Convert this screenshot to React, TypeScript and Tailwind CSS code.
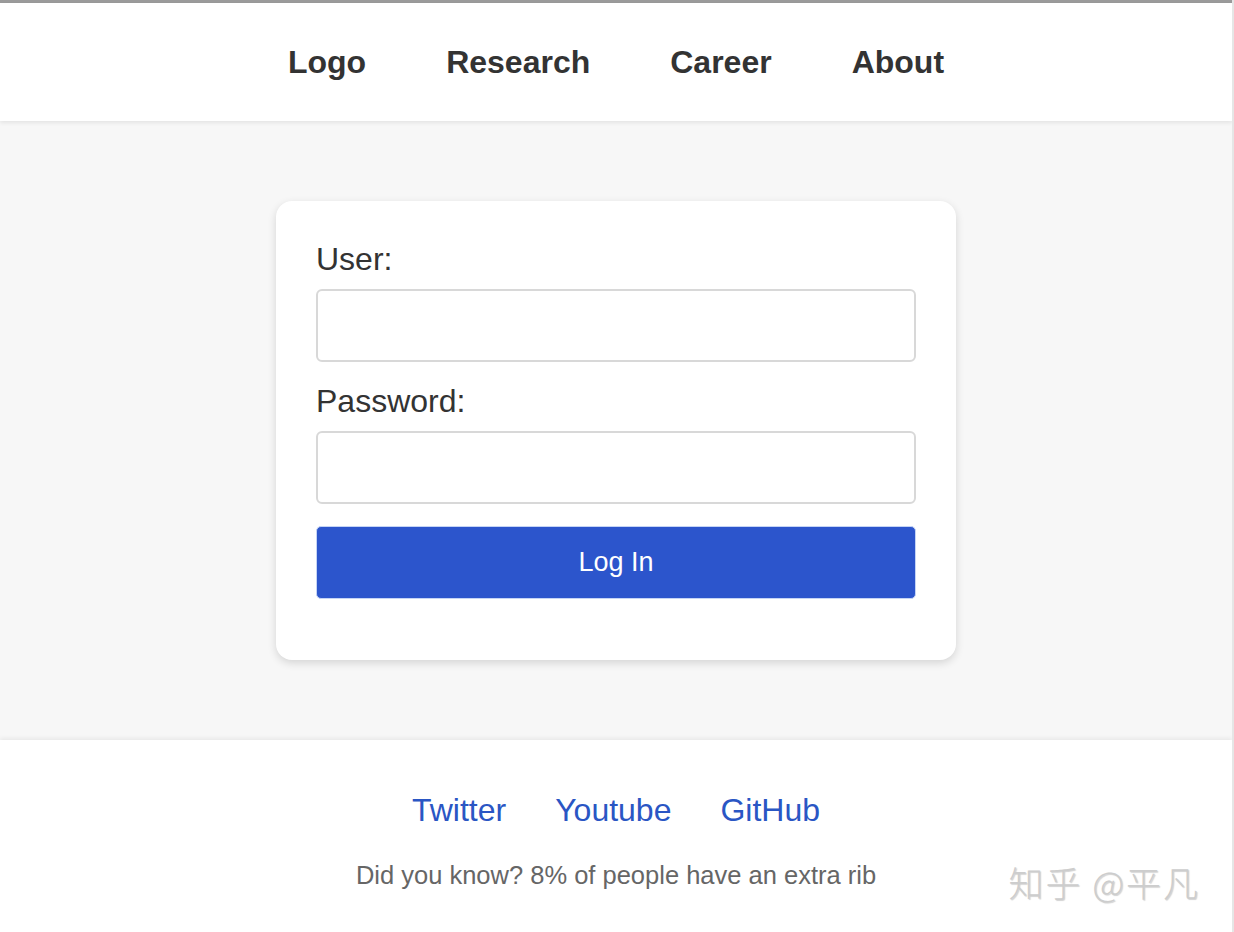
export default function App() {
  return (
    <div className="relative min-h-screen overflow-hidden border-r-2 border-[#e6e6e6] bg-white font-['Liberation_Sans',Arial,sans-serif] text-[#333]">
      <div className="h-[3px] bg-[#9a9a9a]" />

      {/* Header */}
      <header className="relative z-10 flex h-[118px] items-center justify-center gap-[80px] bg-white shadow-[0_2px_4px_rgba(0,0,0,0.08)]">
        {['Logo', 'Research', 'Career', 'About'].map((item) => (
          <a key={item} className="text-[32px] font-bold leading-[37px] text-[#333]">
            {item}
          </a>
        ))}
      </header>

      {/* Login */}
      <main className="flex justify-center bg-[#f7f7f7] py-[80px]">
        <form className="flex w-[680px] flex-col rounded-[16px] bg-white px-[40px] pb-[61px] pt-[40px] shadow-[0_3px_8px_rgba(0,0,0,0.14)]">
          <label className="text-[32px] leading-[37px] text-[#333]">User:</label>
          <input
            type="text"
            className="mt-[11px] h-[73px] w-full rounded-[6px] border-2 border-[#d8d8d8] bg-white px-3 outline-none"
          />
          <label className="mt-[21px] text-[32px] leading-[37px] text-[#333]">Password:</label>
          <input
            type="password"
            className="mt-[11px] h-[73px] w-full rounded-[6px] border-2 border-[#d8d8d8] bg-white px-3 outline-none"
          />
          <button
            type="button"
            className="mt-[22px] h-[73px] w-full rounded-[5px] border border-[#c5d4f5] bg-[#2c55cc] text-[27px] text-white"
          >
            Log In
          </button>
        </form>
      </main>

      {/* Footer */}
      <footer className="relative flex flex-col items-center bg-white pb-[44px] pt-[52px] shadow-[0_-2px_4px_rgba(0,0,0,0.06)]">
        <div className="flex items-center gap-[49px]">
          {['Twitter', 'Youtube', 'GitHub'].map((link) => (
            <a key={link} className="text-[32px] leading-[37px] text-[#2a56c4]">
              {link}
            </a>
          ))}
        </div>
        <p className="mt-[32px] text-[25.5px] leading-[29px] text-[#666]">
          Did you know? 8% of people have an extra rib
        </p>
      </footer>

      {/* watermark */}
      <span className="absolute bottom-[35px] right-[32px] font-['Noto_Sans_CJK_SC',sans-serif] text-[35px] font-light leading-none tracking-[2px] text-[#cdcdcd] [text-shadow:1px_1px_1px_rgba(0,0,0,0.18)]">
        知乎 @平凡
      </span>
    </div>
  );
}
